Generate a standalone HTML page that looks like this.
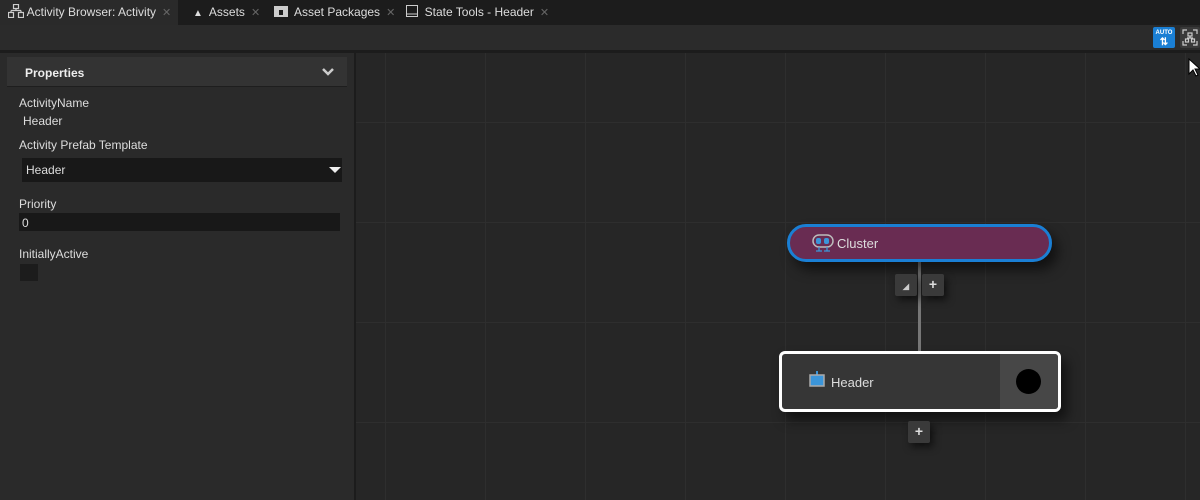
<!DOCTYPE html>
<html><head><style>
*{margin:0;padding:0;box-sizing:border-box}
body{width:1200px;height:500px;overflow:hidden;background:#262626;font-family:"Liberation Sans",sans-serif;font-size:12px;color:#ddd;position:relative}
.abs{position:absolute}
.tabbar{left:0;top:0;width:1200px;height:25px;background:#1c1c1c}
.tab{top:0;height:25px;line-height:25px;font-size:12px;color:#ddd;white-space:nowrap}
.x{color:#666;font-size:11px;margin-left:6px}
.toolbar{left:0;top:25px;width:1200px;height:25px;background:#2b2b2b}
.sep{left:0;top:50px;width:1200px;height:3px;background:#1c1c1c}
.left{left:0;top:53px;width:354px;height:447px;background:#2a2a2a}
.div{left:354px;top:53px;width:2px;height:447px;background:#1c1c1c}
.lbl{font-size:12px;color:#ddd}
.field{background:#181818}
.grid{left:356px;top:53px;width:844px;height:447px;background-image:linear-gradient(to right,#2e2e2e 1px,transparent 1px),linear-gradient(to bottom,#2e2e2e 1px,transparent 1px);background-size:100px 100px;background-position:29px 69px}
.btn{width:22px;height:22px;background:#3a3a3a;border-radius:2px;color:#ddd;text-align:center;line-height:21px;font-weight:bold;font-size:14px;box-shadow:3px 4px 8px rgba(0,0,0,.6)}
</style></head><body>
<div class="abs tabbar"></div>
<div class="abs" style="left:0;top:0;width:178px;height:25px;background:#2a2a2a"></div>
<div class="abs tab" style="left:8px"><svg width="16" height="14" style="vertical-align:-2px"><g fill="none" stroke="#ccc" stroke-width="1.2"><rect x="5.5" y="0.5" width="5" height="4"/><path d="M8 4.5v2M3 6.5h10M3 6.5v2M13 6.5v2"/><rect x="0.5" y="8.5" width="5" height="5"/><rect x="10.5" y="8.5" width="5" height="5"/></g></svg> Activity Browser: Activity<span class="x">✕</span></div>
<div class="abs tab" style="left:193px"><span style="font-size:10px">▲</span>&nbsp; Assets<span class="x">✕</span></div>
<div class="abs tab" style="left:274px"><svg width="14" height="12" style="vertical-align:-1px"><rect x="0" y="1" width="14" height="11" fill="#ccc"/><rect x="5" y="5" width="4" height="5" fill="#1c1c1c"/></svg>&nbsp; Asset Packages<span class="x">✕</span></div>
<div class="abs tab" style="left:406px"><svg width="12" height="12" style="vertical-align:-1px"><rect x="0.5" y="0.5" width="11" height="11" fill="none" stroke="#ccc"/><path d="M1 9h10" stroke="#ccc"/></svg>&nbsp; State Tools - Header<span class="x">✕</span></div>
<div class="abs toolbar"></div>
<div class="abs" style="left:1153px;top:27px;width:22px;height:21px;background:#1a7fd4;border-radius:2px;color:#fff;font-size:6px;font-weight:bold;text-align:center;line-height:9px;padding-top:2px">AUTO<br><span style="font-size:10px">⇅</span></div>
<div class="abs" style="left:1180px;top:27px;width:20px;height:21px;background:#3a3a3a;border-radius:2px"><svg width="20" height="21"><g fill="none" stroke="#ccc" stroke-width="1.2"><path d="M3 7V3h4M13 3h4v4M17 14v4h-4M7 18H3v-4"/><rect x="8" y="6" width="4" height="3"/><path d="M10 9v2M7 11h6"/><rect x="5.5" y="12" width="3" height="3"/><rect x="11.5" y="12" width="3" height="3"/></g></svg></div>
<div class="abs sep"></div>
<div class="abs left"></div>
<div class="abs div"></div>
<div class="abs" style="left:7px;top:57px;width:340px;height:30px;background:#333;border-bottom:1px solid #1e1e1e"></div>
<div class="abs lbl" style="left:25px;top:66px;font-weight:bold;color:#eee">Properties</div>
<svg class="abs" style="left:322px;top:68px" width="12" height="9"><path d="M1 1l5 5 5-5" fill="none" stroke="#ccc" stroke-width="2.5"/></svg>
<div class="abs lbl" style="left:19px;top:96px">ActivityName</div>
<div class="abs lbl" style="left:23px;top:114px">Header</div>
<div class="abs lbl" style="left:19px;top:138px">Activity Prefab Template</div>
<div class="abs field" style="left:22px;top:158px;width:320px;height:24px"></div>
<div class="abs lbl" style="left:26px;top:163px">Header</div>
<div class="abs" style="left:329px;top:167px;width:0;height:0;border-left:6px solid transparent;border-right:6px solid transparent;border-top:6px solid #eee"></div>
<div class="abs lbl" style="left:19px;top:197px">Priority</div>
<div class="abs field" style="left:19px;top:213px;width:321px;height:18px"></div>
<div class="abs lbl" style="left:22px;top:216px">0</div>
<div class="abs lbl" style="left:19px;top:247px">InitiallyActive</div>
<div class="abs field" style="left:20px;top:264px;width:18px;height:17px;background:#1c1c1c"></div>
<div class="abs grid"></div>
<div class="abs" style="left:918px;top:262px;width:3px;height:90px;background:#777"></div>
<div class="abs" style="left:787px;top:224px;width:265px;height:38px;border-radius:19px;background:#692c52;border:3px solid #1a7fd4;box-shadow:6px 8px 12px rgba(0,0,0,.55)"></div>
<svg class="abs" style="left:812px;top:234px" width="22" height="19"><rect x="1" y="1" width="20" height="12" rx="6" fill="none" stroke="#bbb" stroke-width="1.5"/><rect x="4" y="4" width="5" height="6" rx="2" fill="#3b95d9"/><rect x="12" y="4" width="5" height="6" rx="2" fill="#3b95d9"/><path d="M7 13v4M4 17h6M15 13v4M12 17h6" stroke="#3b95d9" stroke-width="1.3"/></svg>
<div class="abs" style="left:837px;top:236px;font-size:13px;color:#ddd">Cluster</div>
<div class="abs btn" style="left:895px;top:274px"><span style="font-size:8px;color:#ccc">◢</span></div>
<div class="abs btn" style="left:922px;top:274px">+</div>
<div class="abs" style="left:779px;top:351px;width:282px;height:61px;border-radius:6px;background:#363636;border:3px solid #fff;box-shadow:6px 8px 12px rgba(0,0,0,.55);overflow:hidden"><div class="abs" style="right:0;top:0;width:58px;height:55px;background:#474747"></div><div class="abs" style="right:17px;top:15px;width:25px;height:25px;border-radius:50%;background:#000"></div></div>
<svg class="abs" style="left:809px;top:370px" width="16" height="18"><path d="M8 1v4" stroke="#3b95d9" stroke-width="2"/><rect x="1" y="5" width="14" height="11" fill="#3b95d9" stroke="#aaa" stroke-width="1.5"/></svg>
<div class="abs" style="left:831px;top:375px;font-size:13px;color:#ddd">Header</div>
<div class="abs btn" style="left:908px;top:421px">+</div>
<svg class="abs" style="left:1188px;top:58px" width="12" height="20"><path d="M1 1v15l4-4 3 6 2-1-3-6h5z" fill="#fff" stroke="#000"/></svg>
</body></html>
